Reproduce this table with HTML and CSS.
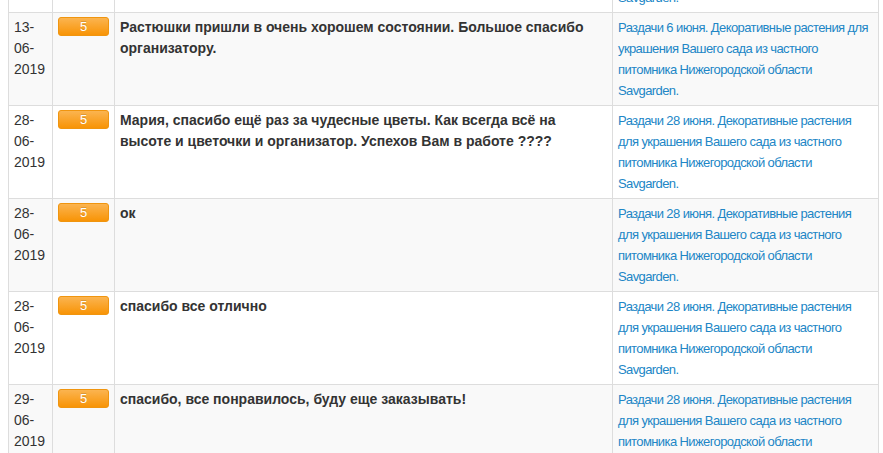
FILE: index.html
```html
<!DOCTYPE html>
<html lang="ru">
<head>
<meta charset="utf-8">
<title>Отзывы</title>
<link rel="stylesheet" href="styles.css">
</head>
<body>
<div class="wrap">
<table class="reviews">
<colgroup>
<col class="c-date"><col class="c-mark"><col class="c-text"><col class="c-link">
</colgroup>
<tbody>
<tr class="odd">
<td class="date">12-<br>06-<br>2019</td>
<td><span class="mark">5</span></td>
<td class="text">спасибо</td>
<td class="link"><a href="#">Раздачи 6 июня. Декоративные растения для украшения Вашего сада из частного питомника Нижегородской области Savgarden.</a></td>
</tr>
<tr class="even">
<td class="date">13-<br>06-<br>2019</td>
<td><span class="mark">5</span></td>
<td class="text">Растюшки пришли в очень хорошем состоянии. Большое спасибо организатору.</td>
<td class="link"><a href="#">Раздачи 6 июня. Декоративные растения для украшения Вашего сада из частного питомника Нижегородской области Savgarden.</a></td>
</tr>
<tr class="odd">
<td class="date">28-<br>06-<br>2019</td>
<td><span class="mark">5</span></td>
<td class="text">Мария, спасибо ещё раз за чудесные цветы. Как всегда всё на высоте и цветочки и организатор. Успехов Вам в работе ????</td>
<td class="link"><a href="#">Раздачи 28 июня. Декоративные растения для украшения Вашего сада из частного питомника Нижегородской области Savgarden.</a></td>
</tr>
<tr class="even">
<td class="date">28-<br>06-<br>2019</td>
<td><span class="mark">5</span></td>
<td class="text">ок</td>
<td class="link"><a href="#">Раздачи 28 июня. Декоративные растения для украшения Вашего сада из частного питомника Нижегородской области Savgarden.</a></td>
</tr>
<tr class="odd">
<td class="date">28-<br>06-<br>2019</td>
<td><span class="mark">5</span></td>
<td class="text">спасибо все отлично</td>
<td class="link"><a href="#">Раздачи 28 июня. Декоративные растения для украшения Вашего сада из частного питомника Нижегородской области Savgarden.</a></td>
</tr>
<tr class="even">
<td class="date">29-<br>06-<br>2019</td>
<td><span class="mark">5</span></td>
<td class="text">спасибо, все понравилось, буду еще заказывать!</td>
<td class="link"><a href="#">Раздачи 28 июня. Декоративные растения для украшения Вашего сада из частного питомника Нижегородской области Savgarden.</a></td>
</tr>
</tbody>
</table>
</div>
</body>
</html>
```
FILE: styles.css
```css
html, body {
  margin: 0;
  padding: 0;
  background: #fff;
  overflow: hidden;
}
body {
  font-family: "Liberation Sans", Arial, sans-serif;
  font-size: 14px;
  line-height: 21px;
  color: #333;
}
.wrap {
  padding: 0 5px 0 8px;
}
.reviews {
  border-collapse: collapse;
  table-layout: fixed;
  width: 870px;
  margin-top: -81px;
}
.c-date { width: 44px; }
.c-mark { width: 62px; }
.c-text { width: 498px; }
.c-link { width: 266px; }
.reviews td {
  border: 1px solid #ddd;
  padding: 4px 5px;
  vertical-align: top;
  text-align: left;
}
.reviews tr.even td {
  background: #f9f9f9;
}
.text {
  font-weight: bold;
}
.link {
  font-size: 13px;
  letter-spacing: -0.6px;
}
.link a {
  color: #2186c6;
  text-decoration: none;
}
.mark {
  display: block;
  width: 51px;
  height: 19px;
  box-sizing: border-box;
  border-radius: 3px;
  background: linear-gradient(to bottom, #fbb450, #f89406);
  border: 1px solid #f0950f;
  color: #fff;
  font-size: 13px;
  line-height: 17px;
  text-align: center;
  text-shadow: 0 -1px 0 rgba(0, 0, 0, 0.15);
}
```
